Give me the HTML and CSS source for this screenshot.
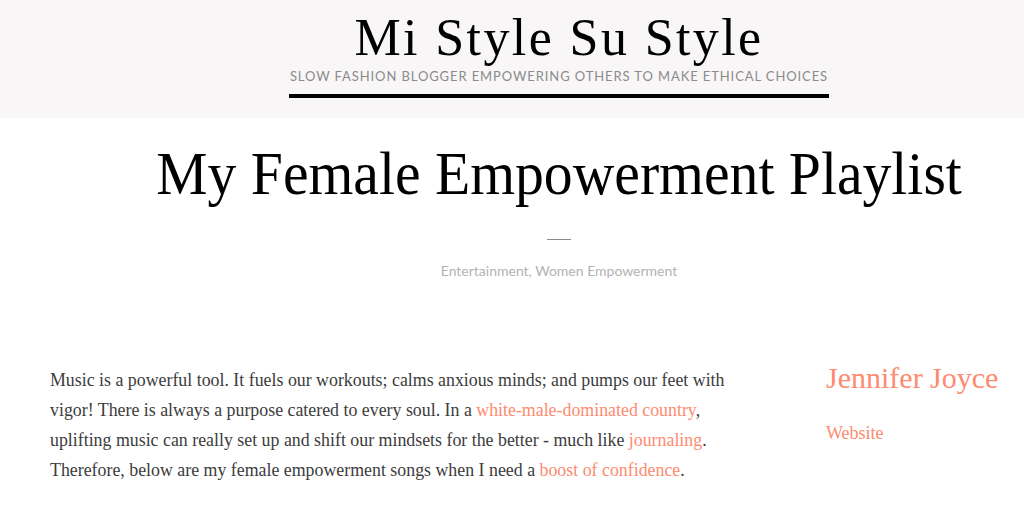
FILE: index.html
```html
<!DOCTYPE html>
<html lang="en">
<head>
<meta charset="utf-8">
<title>My Female Empowerment Playlist</title>
<link rel="stylesheet" href="styles.css">
</head>
<body>
<header class="site-header">
  <div class="brand">
    <h1 class="site-title">Mi Style Su Style</h1>
    <p class="tagline">Slow Fashion Blogger Empowering Others To Make Ethical Choices</p>
  </div>
</header>
<main class="post">
  <div class="post-head">
    <h2 class="post-title">My Female Empowerment Playlist</h2>
    <div class="divider"></div>
    <p class="cats">Entertainment, Women Empowerment</p>
  </div>
  <div class="content">
    <p class="body-text">Music is a powerful tool. It fuels our workouts; calms anxious minds; and pumps our feet with vigor! There is always a purpose catered to every soul. In a <a href="#">white-male-dominated country</a>, uplifting music can really set up and shift our mindsets for the better - much like <a href="#">journaling</a>. Therefore, below are my female empowerment songs when I need a <a href="#">boost of confidence</a>.</p>
    <aside class="author">
      <div class="author-name">Jennifer Joyce</div>
      <a class="author-link" href="#">Website</a>
    </aside>
  </div>
</main>
</body>
</html>
```
FILE: styles.css
```css
* { box-sizing: border-box; }
html, body { margin: 0; padding: 0; background: #fff; }
body { font-family: "Liberation Serif", serif; }

.site-header {
  background: #f8f6f6;
  height: 118px;
  display: flex;
  justify-content: center;
  padding: 10px 0 0 94px;
}
.brand {
  display: flex;
  flex-direction: column;
  align-items: center;
  width: 540px;
  border-bottom: 4px solid #000;
  height: 88px;
}
.site-title {
  margin: 0;
  font-family: "Liberation Serif", serif;
  font-weight: normal;
  font-size: 52px;
  line-height: 56px;
  letter-spacing: 2.4px;
  color: #000;
}
.tagline {
  margin: 2px 0 0;
  font-family: Lato, sans-serif;
  font-size: 13px;
  line-height: 16px;
  letter-spacing: 0.9px;
  text-transform: uppercase;
  color: #8b8b8b;
  white-space: nowrap;
}

.post-head {
  display: flex;
  flex-direction: column;
  align-items: center;
  padding-left: 94px;
}
.post-title {
  margin: 17px 0 0;
  font-family: "Liberation Serif", serif;
  font-weight: normal;
  font-size: 62px;
  line-height: 76px;
  color: #000;
  white-space: nowrap;
  transform: scaleX(0.93);
}
.divider {
  width: 24px;
  height: 1px;
  background: #8a8a8a;
  margin-top: 28px;
}
.cats {
  margin: 22px 0 0;
  font-family: Lato, sans-serif;
  font-size: 14px;
  color: #b3b3b3;
}
.content {
  display: flex;
  margin-top: 86px;
  padding-left: 50px;
}
.body-text {
  margin: 0;
  width: 700px;
  font-size: 17.85px;
  line-height: 30px;
  color: #3c3c3c;
}
.body-text a { color: #fd8b6f; text-decoration: none; }
.author {
  margin-left: 76px;
  margin-top: -4px;
  display: flex;
  flex-direction: column;
}
.author-name {
  font-size: 30px;
  line-height: 34px;
  color: #fd8b6f;
}
.author-link {
  margin-top: 28px;
  font-size: 18px;
  color: #fd8b6f;
  text-decoration: none;
}
```
